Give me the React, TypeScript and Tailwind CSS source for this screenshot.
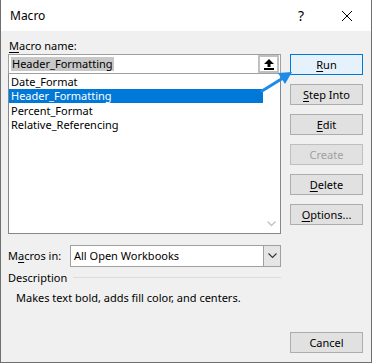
import React from "react";

const font = { fontFamily: '"Noto Sans", "Segoe UI", Arial, sans-serif' };

function Btn({ children, primary, disabled }: { children: React.ReactNode; primary?: boolean; disabled?: boolean }) {
  return (
    <div
      className={
        "h-[21px] w-[73px] flex items-center justify-center text-[11px] leading-none border " +
        (primary
          ? "bg-[#e5f1fb] border-[#0078d7] text-black"
          : disabled
          ? "bg-[#e1e1e1] border-[#bfbfbf] text-[#a0a0a0]"
          : "bg-[#e1e1e1] border-[#adadad] text-black")
      }
    >
      {children}
    </div>
  );
}

export default function App() {
  return (
    <div
      className="relative w-[372px] h-[363px] flex flex-col border-l border-r border-b border-[#6f6f6f] bg-[#f0f0f0] text-black"
      style={font}
    >
      {/* title bar */}
      <div className="h-[31px] bg-white flex items-center shrink-0">
        <span className="ml-[9px] text-[12px]">Macro</span>
        <span className="ml-auto text-[14px] mr-[37px]">?</span>
        <svg width="12" height="12" viewBox="0 0 12 12" className="mr-[18px]">
          <path d="M1 1 L11 11 M11 1 L1 11" stroke="#000" strokeWidth="1" />
        </svg>
      </div>

      {/* body */}
      <div className="flex-1 flex pl-[7px] pr-[8px] gap-[9px]">
        {/* left column */}
        <div className="w-[273px] flex flex-col">
          <div className="mt-[7px] h-[15px] text-[11px] leading-[15px] pl-[1px]">
            <span className="underline underline-offset-2">M</span>acro name:
          </div>
          <div className="mt-[1px] h-[20px] border border-[#a0a0a0] bg-white flex items-center">
            <span className="ml-[2px] bg-[#c8c8c8] text-[11px] leading-[14px] px-[1px]">Header_Formatting</span>
            <div className="ml-auto mr-[1px] h-[18px] w-[21px] border-2 border-[#c0c0c0] bg-white flex items-center justify-center">
              <svg width="10" height="11" viewBox="0 0 10 11">
                <path d="M5 0 L10 5 L6.5 5 L6.5 8 L3.5 8 L3.5 5 L0 5 Z" fill="#000" />
                <rect x="0" y="9" width="10" height="2" fill="#000" />
              </svg>
            </div>
          </div>
          <div className="h-[160px] border border-t-0 border-[#828790] bg-white flex">
            <div className="flex-1 flex flex-col pt-[1px] text-[11px]">
              <div className="h-[14px] leading-[14px] pl-[2px]">Date_Format</div>
              <div className="h-[14px] leading-[14px] pl-[2px] bg-[#0078d7] text-white">Header_Formatting</div>
              <div className="mt-[1px] h-[14px] leading-[14px] pl-[2px]">Percent_Format</div>
              <div className="h-[13px] leading-[13px] pl-[2px]">Relative_Referencing</div>
            </div>
            <div className="w-[17px] flex flex-col justify-end items-center pb-[6px]">
              <svg width="9" height="6" viewBox="0 0 9 6">
                <path d="M0.5 0.5 L4.5 4.5 L8.5 0.5" stroke="#c2c2c2" strokeWidth="1.3" fill="none" />
              </svg>
            </div>
          </div>

          <div className="mt-[11px] flex items-center h-[22px]">
            <span className="w-[62px] text-[11px]">
              M<span className="underline underline-offset-2">a</span>cros in:
            </span>
            <div className="flex-1 h-[22px] border border-[#a0a0a0] bg-white flex items-center">
              <span className="ml-[3px] text-[11px]">All Open Workbooks</span>
              <div className="ml-auto h-full w-[17px] bg-[#e5e5e5] border-l border-[#a0a0a0] flex items-center justify-center">
                <svg width="9" height="6" viewBox="0 0 9 6">
                  <path d="M0.5 0.5 L4.5 4.5 L8.5 0.5" stroke="#333" strokeWidth="1.1" fill="none" />
                </svg>
              </div>
            </div>
          </div>

          <div className="mt-[3px] h-[15px] flex items-center">
            <span className="text-[11px] leading-[15px]">Description</span>
            <div className="flex-1 ml-[6px] h-px bg-[#dcdcdc]" />
          </div>
          <div className="mt-[5px] pl-[8px] text-[11px] leading-[15px]">
            Makes text bold, adds fill color, and centers.
          </div>
        </div>

        {/* right column */}
        <div className="w-[73px] flex flex-col pt-[23px] pb-[9px]">
          <div className="flex flex-col gap-[9px]">
            <Btn primary>
              <span className="underline underline-offset-2">R</span>un
            </Btn>
            <Btn>
              <span className="underline underline-offset-2">S</span>tep Into
            </Btn>
            <Btn>
              <span className="underline underline-offset-2">E</span>dit
            </Btn>
            <Btn disabled>Create</Btn>
            <Btn>
              <span className="underline underline-offset-2">D</span>elete
            </Btn>
            <Btn>
              <span className="underline underline-offset-2">O</span>ptions...
            </Btn>
          </div>
          <div className="mt-auto">
            <Btn>Cancel</Btn>
          </div>
        </div>
      </div>

      {/* annotation arrow */}
      <svg className="absolute left-0 top-0 pointer-events-none" width="372" height="363">
        <path d="M261 91 L282 78" stroke="#1e8be8" strokeWidth="3" strokeLinecap="round" />
        <path d="M291 72 L277 73 L284 84 Z" fill="#1e8be8" />
      </svg>
    </div>
  );
}
